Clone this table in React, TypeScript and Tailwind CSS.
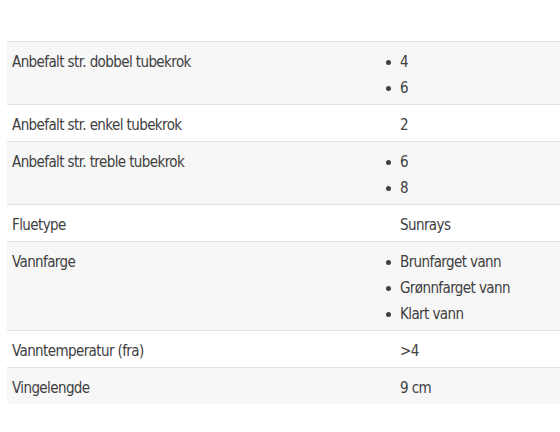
const rows: { label: string; values: string[]; list: boolean }[] = [
  { label: "Anbefalt str. dobbel tubekrok", values: ["4", "6"], list: true },
  { label: "Anbefalt str. enkel tubekrok", values: ["2"], list: false },
  { label: "Anbefalt str. treble tubekrok", values: ["6", "8"], list: true },
  { label: "Fluetype", values: ["Sunrays"], list: false },
  { label: "Vannfarge", values: ["Brunfarget vann", "Grønnfarget vann", "Klart vann"], list: true },
  { label: "Vanntemperatur (fra)", values: [">4"], list: false },
  { label: "Vingelengde", values: ["9 cm"], list: false },
];

export default function App() {
  return (
    <div className="w-[560px] h-[432px] bg-white overflow-hidden pt-[41px] pl-[7px] font-['DejaVu_Sans_Condensed',sans-serif] [font-stretch:condensed] text-[15px] tracking-[-0.6px] leading-[26px] text-[#404040]">
      <div className="w-[600px]">
        {rows.map((row, i) => (
          <div
            key={row.label}
            className={`flex border-t border-[#e2e2e2] pt-[7px] pb-[3px] ${i % 2 === 0 ? "bg-[#f7f7f7]" : "bg-white"}`}
          >
            <div className="w-[376px] pl-[5px]">{row.label}</div>
            <div className="pl-[17px]">
              {row.list ? (
                <ul>
                  {row.values.map((v) => (
                    <li key={v} className="relative">
                      <span className="absolute left-[-14px] top-[11px] w-[5px] h-[5px] rounded-full bg-[#404040]" />
                      {v}
                    </li>
                  ))}
                </ul>
              ) : (
                row.values[0]
              )}
            </div>
          </div>
        ))}
      </div>
    </div>
  );
}
